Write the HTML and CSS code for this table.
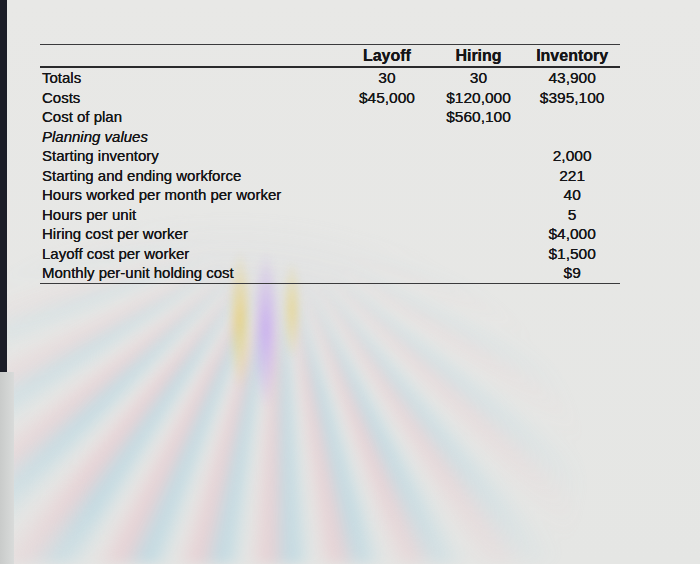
FILE: index.html
```html
<!DOCTYPE html>
<html>
<head>
<meta charset="utf-8">
<link rel="stylesheet" href="styles.css">
</head>
<body>
<div class="screen">
  <div class="moire"></div>
  <div class="moire-band"></div>
  <div class="bezel"></div>
  <div class="bezel-edge"></div>
  <div class="sheet">
    <table class="plan">
      <thead>
        <tr>
          <th class="label"></th>
          <th>Layoff</th>
          <th>Hiring</th>
          <th>Inventory</th>
        </tr>
      </thead>
      <tbody>
        <tr><td class="label">Totals</td><td>30</td><td>30</td><td>43,900</td></tr>
        <tr><td class="label">Costs</td><td>$45,000</td><td>$120,000</td><td>$395,100</td></tr>
        <tr><td class="label">Cost of plan</td><td></td><td>$560,100</td><td></td></tr>
        <tr><td class="label italic">Planning values</td><td></td><td></td><td></td></tr>
        <tr><td class="label">Starting inventory</td><td></td><td></td><td>2,000</td></tr>
        <tr><td class="label">Starting and ending workforce</td><td></td><td></td><td>221</td></tr>
        <tr><td class="label">Hours worked per month per worker</td><td></td><td></td><td>40</td></tr>
        <tr><td class="label">Hours per unit</td><td></td><td></td><td>5</td></tr>
        <tr><td class="label">Hiring cost per worker</td><td></td><td></td><td>$4,000</td></tr>
        <tr><td class="label">Layoff cost per worker</td><td></td><td></td><td>$1,500</td></tr>
        <tr><td class="label">Monthly per-unit holding cost</td><td></td><td></td><td>$9</td></tr>
      </tbody>
    </table>
  </div>
</div>
</body>
</html>
```
FILE: styles.css
```css
html, body {
  margin: 0;
  padding: 0;
}
body {
  width: 700px;
  height: 564px;
  overflow: hidden;
  font-family: "Liberation Sans", Arial, sans-serif;
  color: #151517;
}
.screen {
  position: relative;
  width: 700px;
  height: 564px;
  overflow: hidden;
  background: linear-gradient(180deg, #e8e8e6 0%, #e5e6e4 100%);
}
.moire {
  position: absolute;
  left: 0;
  top: 0;
  width: 700px;
  height: 564px;
  background: repeating-conic-gradient(from 90deg at 280px 230px,
    rgba(150, 205, 225, 0) 0deg,
    rgba(150, 205, 225, 0.6) 4deg,
    rgba(235, 180, 190, 0.55) 8deg,
    rgba(150, 205, 225, 0) 12deg);
  filter: blur(6px);
  -webkit-mask-image: radial-gradient(ellipse 360px 260px at 230px 470px, #000 40%, transparent 100%);
  mask-image: radial-gradient(ellipse 360px 260px at 230px 470px, #000 40%, transparent 100%);
  opacity: 0.75;
}
.moire-band {
  position: absolute;
  left: 200px;
  top: 250px;
  width: 120px;
  height: 180px;
  background:
    radial-gradient(ellipse 12px 70px at 40px 70px, rgba(235, 205, 90, 0.65), transparent),
    radial-gradient(ellipse 14px 80px at 66px 80px, rgba(195, 155, 245, 0.7), transparent),
    radial-gradient(ellipse 10px 50px at 92px 60px, rgba(235, 210, 100, 0.55), transparent);
  filter: blur(3px);
}
.bezel {
  position: absolute;
  left: 0;
  top: 0;
  width: 7px;
  height: 372px;
  background: #1b1d27;
}
.bezel-edge {
  position: absolute;
  left: 0;
  top: 372px;
  width: 14px;
  height: 192px;
  background: linear-gradient(90deg, #c9cbca, #d9dbda);
}
.sheet {
  position: relative;
  z-index: 1;
  padding: 44px 0 0 40px;
}
.plan {
  width: 580px;
  border-collapse: collapse;
  font-size: 15.5px;
  line-height: 19.5px;
  text-shadow: 0 0 0.4px #151517;
}
.plan thead tr {
  border-top: 1.5px solid #3a3a3c;
  border-bottom: 2px solid #2a2a2c;
}
.plan th {
  font-weight: bold;
  font-size: 16px;
  height: 21px;
  padding: 0;
  text-align: center;
  vertical-align: middle;
}
.plan tbody tr:last-child {
  border-bottom: 1.5px solid #3a3a3c;
}
.plan td {
  padding: 0;
  height: 19.4px;
  text-align: center;
  white-space: nowrap;
}
.plan .label {
  width: 300px;
  font-size: 15px;
  text-align: left;
  padding-left: 2px;
}
.plan th:nth-child(2), .plan td:nth-child(2) { width: 92px; }
.plan th:nth-child(3), .plan td:nth-child(3) { width: 92px; }
.plan th:nth-child(4), .plan td:nth-child(4) { width: 96px; }
.italic {
  font-style: italic;
}
```
